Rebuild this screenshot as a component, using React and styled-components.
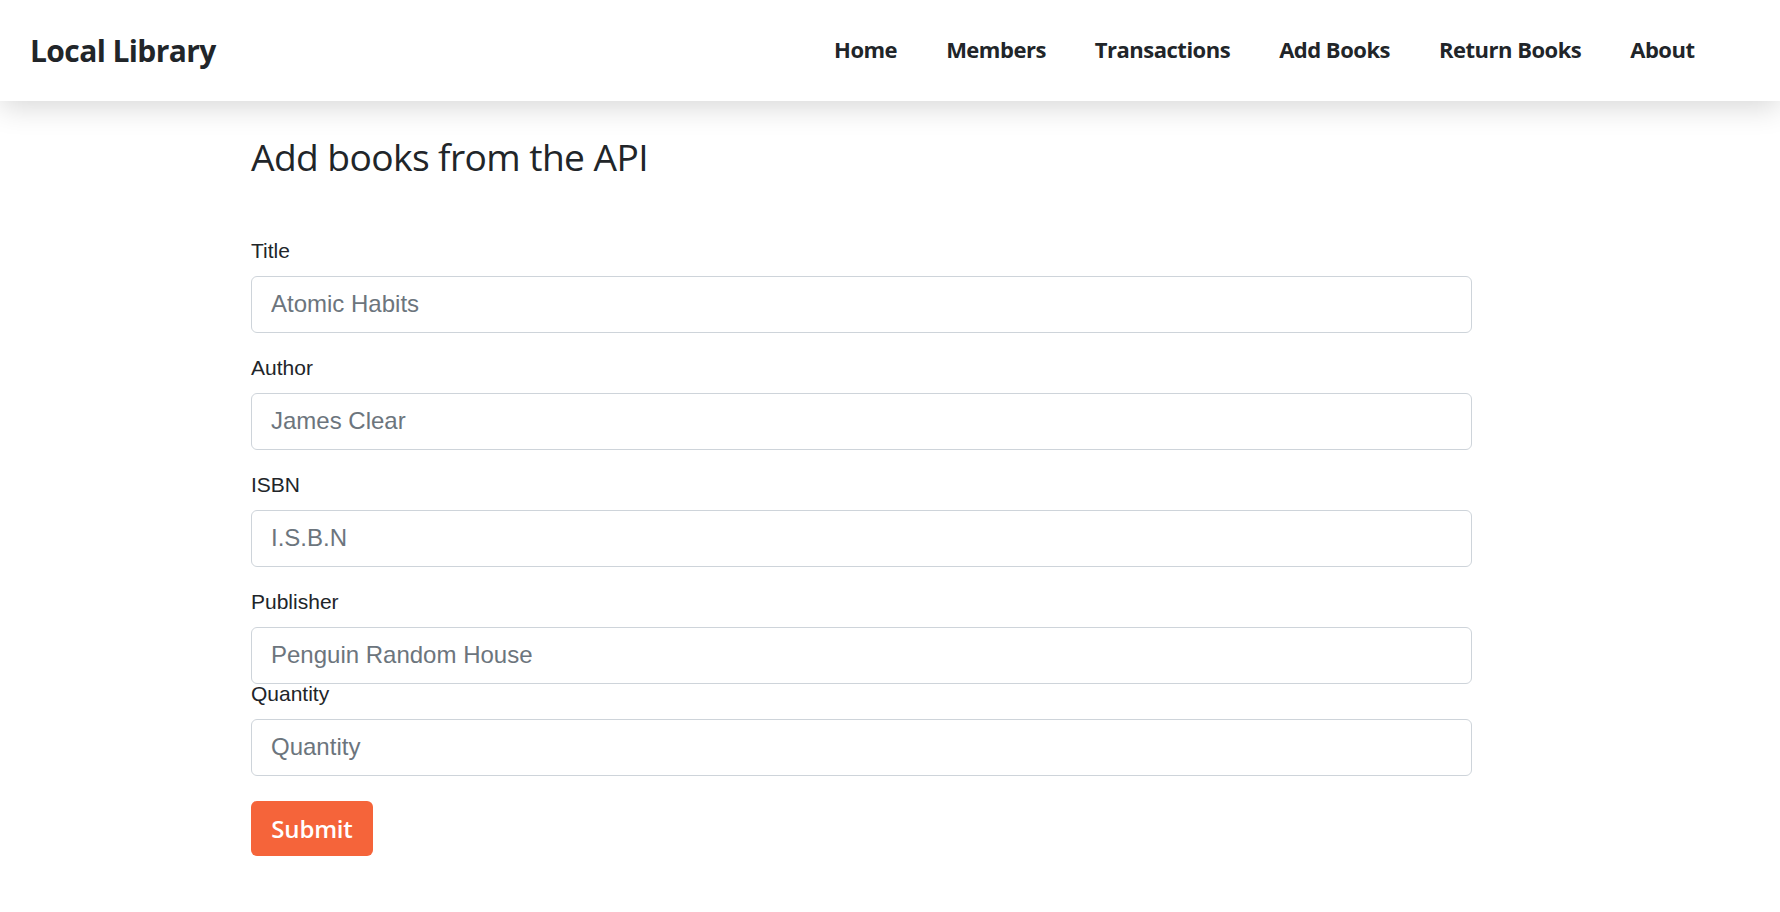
import React from "react";
import styled, { createGlobalStyle } from "styled-components";

const Global = createGlobalStyle`
  html, body { margin: 0; padding: 0; background: #fff; }
  body { font-family: "Liberation Sans", Arial, sans-serif; color: #212529; }
  * { box-sizing: border-box; }
`;

const Header = styled.header`
  height: 101px;
  display: flex;
  align-items: center;
  justify-content: space-between;
  padding: 0 61px 0 30px;
  background: #fff;
  box-shadow: 0 6px 28px rgba(0, 0, 0, 0.16);
  position: relative;
  z-index: 1;
`;

const Brand = styled.a`
  font-family: "Open Sans", sans-serif;
  font-weight: 700;
  font-size: 30px;
  letter-spacing: -0.6px;
  color: #212529;
  text-decoration: none;
  margin-top: -1px;
`;

const Nav = styled.nav`
  display: flex;
  align-items: center;
  margin-top: -3px;
`;

const NavLink = styled.a`
  font-family: "Open Sans", sans-serif;
  font-weight: 700;
  font-size: 22px;
  letter-spacing: -0.5px;
  color: #212529;
  text-decoration: none;
  padding: 0 24.5px;
`;

const Main = styled.main`
  padding: 0 0 40px 251px;
`;

const Heading = styled.h1`
  font-family: "Open Sans", sans-serif;
  font-weight: 400;
  font-size: 37.2px;
  letter-spacing: -0.6px;
  line-height: 1.2;
  margin: 34px 0 56px;
  color: #212529;
`;

const Form = styled.form`
  width: 1221px;
  display: flex;
  flex-direction: column;
`;

const Group = styled.div`
  display: flex;
  flex-direction: column;
  margin-bottom: ${(p) => p.$mb}px;
`;

const Label = styled.label`
  font-size: 21px;
  line-height: 30px;
  margin-bottom: 10px;
  color: #212529;
`;

const Input = styled.input`
  height: 57px;
  width: 100%;
  padding: 10px 19px;
  font-family: "Liberation Sans", Arial, sans-serif;
  font-size: 24px;
  color: #212529;
  border: 1px solid #ced4da;
  border-radius: 6px;
  outline: none;
  &::placeholder { color: #6c757d; opacity: 1; }
`;

const Submit = styled.button`
  align-self: flex-start;
  width: 122px;
  height: 55px;
  margin-top: 25px;
  background: #f5643a;
  color: #fff;
  border: none;
  border-radius: 6px;
  font-family: "Open Sans", sans-serif;
  font-weight: 600;
  font-size: 24px;
  letter-spacing: -0.2px;
  cursor: pointer;
`;

const navItems = ["Home", "Members", "Transactions", "Add Books", "Return Books", "About"];

const fields = [
  { label: "Title", placeholder: "Atomic Habits", mb: 20 },
  { label: "Author", placeholder: "James Clear", mb: 20 },
  { label: "ISBN", placeholder: "I.S.B.N", mb: 20 },
  { label: "Publisher", placeholder: "Penguin Random House", mb: -5 },
  { label: "Quantity", placeholder: "Quantity", mb: 0 },
];

export default function App() {
  return (
    <>
      <Global />
      <Header>
        <Brand href="#">Local Library</Brand>
        <Nav>
          {navItems.map((n) => (
            <NavLink key={n} href="#">{n}</NavLink>
          ))}
        </Nav>
      </Header>
      <Main>
        <Heading>Add books from the API</Heading>
        <Form onSubmit={(e) => e.preventDefault()}>
          {fields.map((f) => (
            <Group key={f.label} $mb={f.mb}>
              <Label>{f.label}</Label>
              <Input placeholder={f.placeholder} />
            </Group>
          ))}
          <Submit type="submit">Submit</Submit>
        </Form>
      </Main>
    </>
  );
}
